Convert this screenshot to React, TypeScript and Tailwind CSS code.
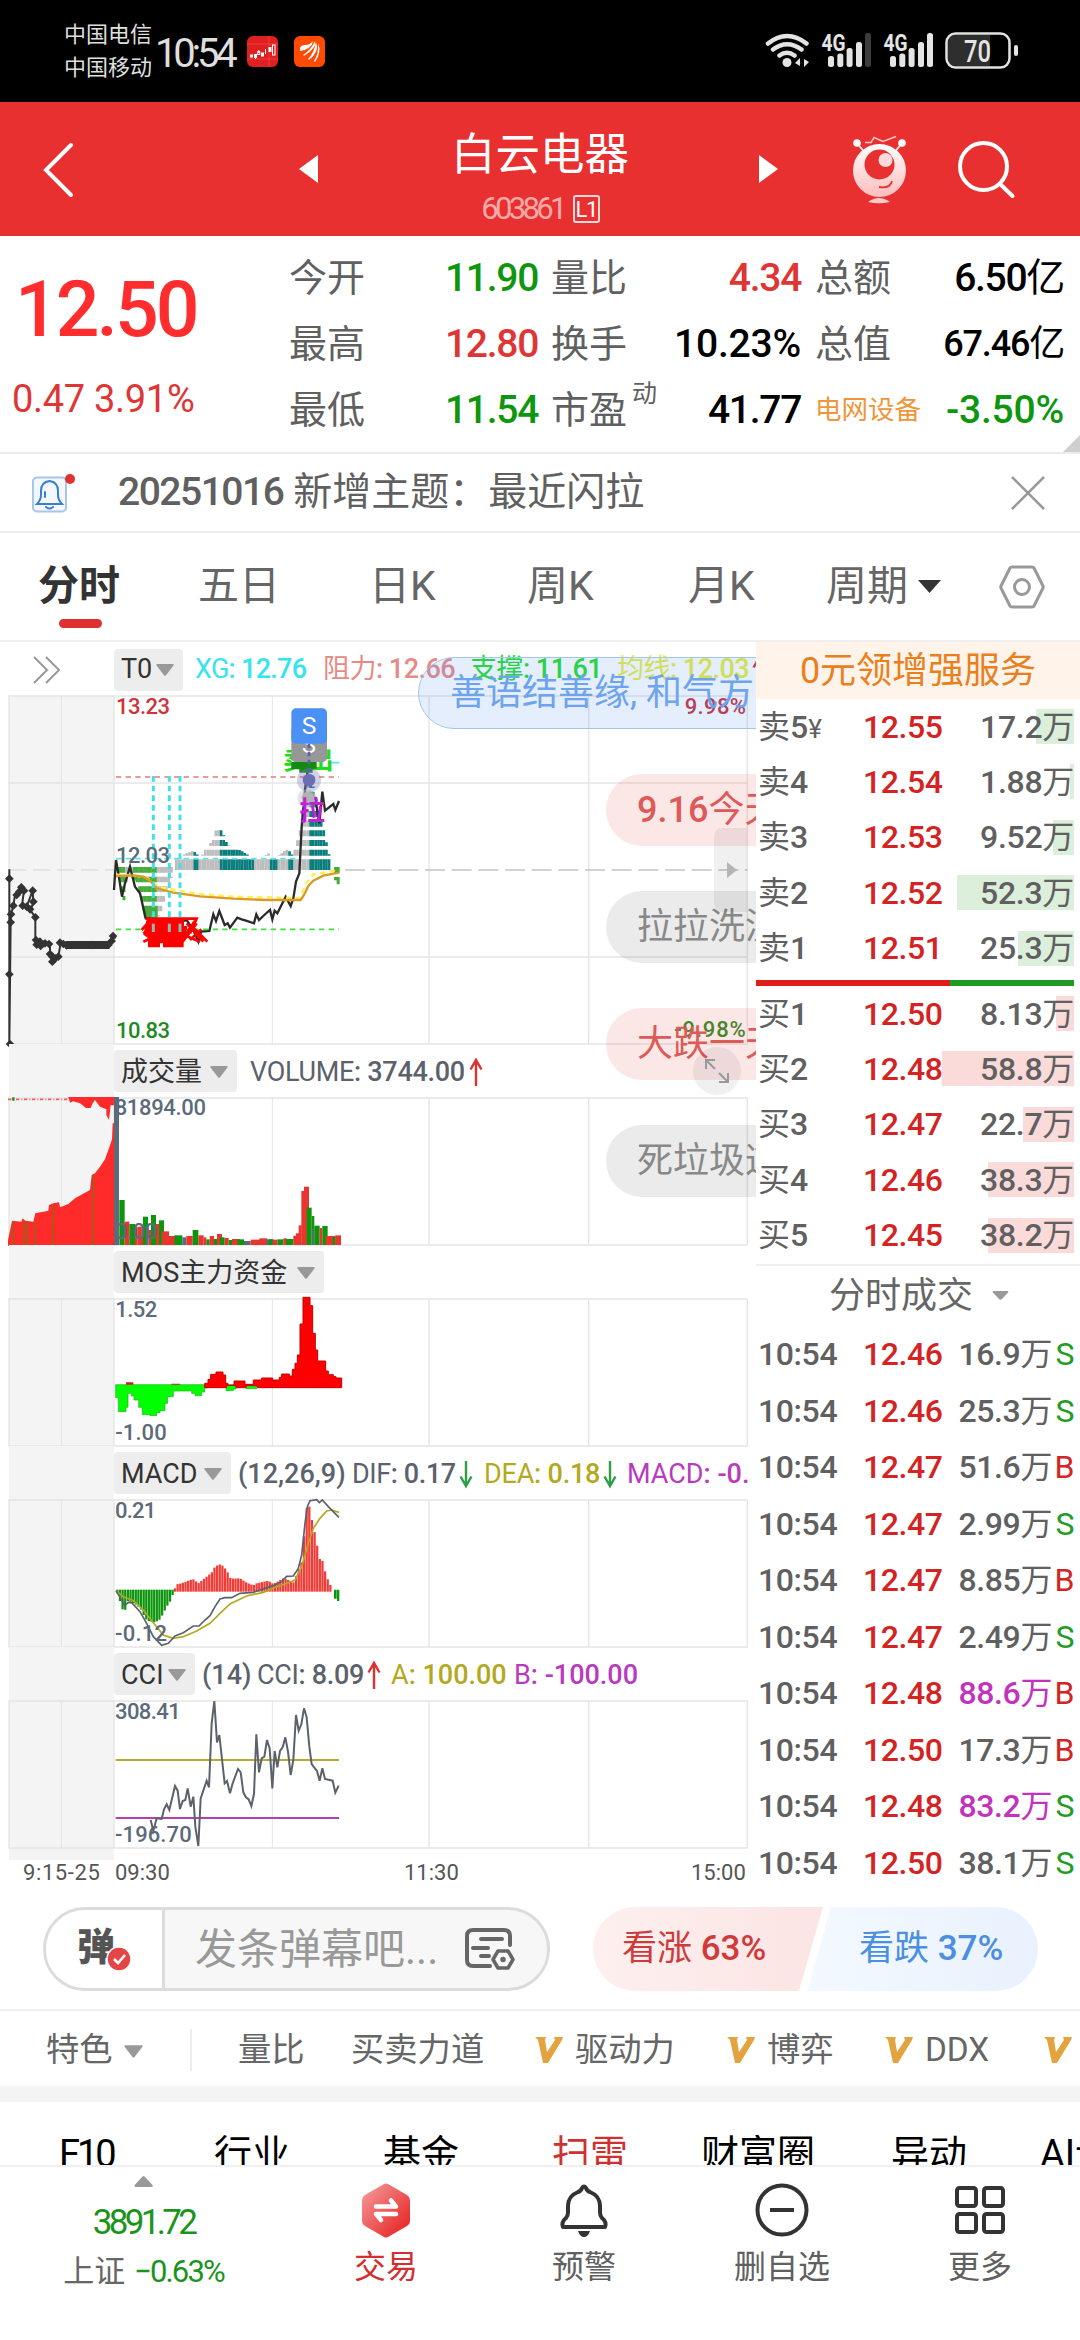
import type { ReactNode } from 'react';

type Point = [number, number];

interface Level {
  label: string;
  price: string;
  volume: string;
  bar: number;
}

const sells: Level[] = [
  { label: '卖5', price: '12.55', volume: '17.2', bar: 38 },
  { label: '卖4', price: '12.54', volume: '1.88', bar: 4 },
  { label: '卖3', price: '12.53', volume: '9.52', bar: 21 },
  { label: '卖2', price: '12.52', volume: '52.3', bar: 117 },
  { label: '卖1', price: '12.51', volume: '25.3', bar: 56 },
];

const buys: Level[] = [
  { label: '买1', price: '12.50', volume: '8.13', bar: 18 },
  { label: '买2', price: '12.48', volume: '58.8', bar: 132 },
  { label: '买3', price: '12.47', volume: '22.7', bar: 51 },
  { label: '买4', price: '12.46', volume: '38.3', bar: 86 },
  { label: '买5', price: '12.45', volume: '38.2', bar: 86 },
];

const trades = [
  { price: '12.46', volume: '16.9', side: 'S' },
  { price: '12.46', volume: '25.3', side: 'S' },
  { price: '12.47', volume: '51.6', side: 'B' },
  { price: '12.47', volume: '2.99', side: 'S' },
  { price: '12.47', volume: '8.85', side: 'B' },
  { price: '12.47', volume: '2.49', side: 'S' },
  { price: '12.48', volume: '88.6', side: 'B', big: true },
  { price: '12.50', volume: '17.3', side: 'B' },
  { price: '12.48', volume: '83.2', side: 'S', big: true },
  { price: '12.50', volume: '38.1', side: 'S' },
];

// Chart space is 3 units per pixel
const priceLine =
  '342,750 348,660 355,700 366,770 375,730 390,680 405,740 420,760 437,835 450,835 470,860 520,850 560,840 580,870 595,905 603,875 628,873 640,823 648,843 658,813 674,855 683,850 690,863 712,833 725,838 738,842 762,850 769,823 777,840 793,825 810,810 817,838 824,812 832,820 857,770 872,798 880,775 888,725 898,700 905,560 915,450 925,380';
const priceTail = '945,470 958,550 967,455 975,512 1000,492 1006,510 1017,483';
const auctionLine =
  '28,688 28,1212 32,847 33,823 40,797 45,765 64,742 72,750 66,797 80,800 98,752 100,785 92,812 106,832 106,905 108,915 150,912 150,942 157,965 175,950 182,908 190,915 325,915 339,888 347,895';
const auctionDots: Point[] = [
  [28, 716], [28, 1003], [30, 1212], [32, 847], [33, 823], [40, 797], [50, 765], [64, 742], [72, 752], [58, 755],
  [68, 797], [80, 800], [98, 752], [100, 785], [90, 808], [106, 832], [108, 900], [110, 914], [120, 905], [122, 918],
  [135, 910], [147, 912], [150, 942], [157, 950], [157, 965], [166, 955], [175, 950], [180, 908], [190, 912],
  [200, 916], [275, 915], [325, 915], [335, 903], [339, 888],
];

const histUp: Point[] = [
  [525, 660], [540, 650], [560, 640], [580, 632], [590, 642], [605, 650], [615, 628], [635, 605], [645, 575],
  [658, 558], [666, 566], [675, 600], [690, 622], [720, 630], [745, 645], [762, 656], [790, 650], [805, 640],
  [822, 654], [845, 640], [862, 625], [878, 645], [890, 610], [900, 570], [915, 470], [928, 420], [940, 440],
  [955, 500], [970, 560], [980, 610], [990, 655],
];
const histDown: Point[] = [
  [356, 710], [364, 765], [374, 785], [382, 710], [395, 705], [408, 730], [420, 760], [430, 800], [440, 830],
  [470, 828], [480, 830], [490, 790], [500, 740], [515, 712], [520, 700],
];
const macdUp: Point[] = [
  [525, 445], [530, 433], [545, 430], [570, 420], [580, 418], [595, 430], [620, 410], [635, 398], [645, 380],
  [658, 373], [670, 378], [685, 400], [692, 416], [720, 415], [740, 428], [760, 436], [770, 430], [805, 422],
  [820, 432], [850, 415], [865, 420], [880, 428], [892, 400], [905, 365], [912, 290], [918, 210], [926, 190],
  [934, 232], [942, 268], [950, 307], [958, 357], [966, 357], [974, 390], [982, 415], [990, 435],
];
const macdDown: Point[] = [
  [352, 460], [358, 475], [365, 505], [374, 515], [384, 482], [395, 487], [410, 495], [425, 510], [435, 535],
  [445, 543], [465, 547], [480, 538], [490, 520], [500, 500], [510, 485], [518, 465],
];

const RED = '#e8362f';
const GREEN = '#0d950d';
const SLATE = '#5b6b7a';
// x, width, top, color
const volumeBars: [number, number, number, string][] = [
  [358, 16, 480, GREEN], [374, 14, 545, RED], [388, 17, 552, GREEN], [405, 8, 562, RED], [413, 16, 560, RED],
  [429, 15, 530, GREEN], [438, 8, 558, SLATE], [446, 8, 570, RED], [453, 15, 525, GREEN], [468, 9, 552, RED],
  [477, 15, 541, GREEN], [485, 22, 574, RED], [507, 18, 588, RED], [523, 24, 586, GREEN], [547, 12, 592, SLATE],
  [559, 19, 588, RED], [578, 17, 570, GREEN], [595, 16, 586, RED], [611, 8, 592, RED], [619, 10, 598, GREEN],
  [629, 13, 588, RED], [642, 9, 597, GREEN], [651, 15, 582, RED], [660, 14, 592, GREEN], [674, 12, 594, RED],
  [686, 10, 600, GREEN], [696, 24, 597, RED], [712, 20, 598, GREEN], [732, 20, 603, SLATE], [752, 28, 599, RED],
  [778, 24, 595, RED], [798, 20, 598, SLATE], [806, 14, 598, GREEN], [818, 14, 599, RED], [832, 18, 598, GREEN],
  [850, 10, 595, RED], [858, 22, 597, GREEN], [880, 12, 587, RED], [888, 10, 580, RED], [896, 9, 556, RED],
  [904, 8, 453, RED], [912, 15, 440, RED], [920, 15, 503, GREEN], [935, 8, 528, GREEN], [937, 6, 565, SLATE],
  [943, 16, 557, GREEN], [959, 8, 564, RED], [967, 16, 558, GREEN], [977, 30, 588, RED], [998, 8, 590, GREEN],
  [1006, 17, 586, RED],
];

// Linear interpolation between the key points
function valueAt(keys: Point[], x: number) {
  for (let i = 1; i < keys.length; i++) {
    const [x0, y0] = keys[i - 1];
    const [x1, y1] = keys[i];
    if (x <= x1) return y0 + ((y1 - y0) * (x - x0)) / (x1 - x0);
  }
  return keys[keys.length - 1][1];
}

function minutes(from: number, to: number) {
  const xs: number[] = [];
  for (let x = from; x <= to; x += 7.9) xs.push(x);
  return xs;
}

function histColor(x: number) {
  const teal =
    (x > 582 && x < 600) || (x > 662 && x < 764) || (x > 811 && x < 822) || (x > 828 && x < 836) || (x > 868 && x < 884) || x > 931;
  return teal ? '#0b7d7d' : '#bdbdbd';
}

// Digits are set a step heavier than the words around them
function Mixed({ text }: { text: string }) {
  return (
    <>
      {text.split(/([0-9.,:%()-]+)/).map((part, i) => (
        <span key={i} className={i % 2 ? 'font-medium' : ''}>
          {part}
        </span>
      ))}
    </>
  );
}

function Pane({ y, h, rows, children }: { y: number; h: number; rows?: number[]; children: ReactNode }) {
  return (
    <svg className="block overflow-visible" width="756" height={h / 3} viewBox={`0 ${y} 2268 ${h}`}>
      <rect x="27" y={y} width="315" height={h} fill="#f4f4f4" />
      <g stroke="#e4e4e4" strokeWidth="4">
        {[184, 817].map((x) => (
          <line key={x} x1={x} x2={x} y1={y} y2={y + h} strokeWidth="3" />
        ))}
        {[27, 342, 1287, 1766, 2242].map((x) => (
          <line key={x} x1={x} x2={x} y1={y} y2={y + h} />
        ))}
        {[y, y + h, ...(rows ?? [])].map((v) => (
          <line key={v} x1="25" x2="2243" y1={v} y2={v} strokeWidth="5" />
        ))}
      </g>
      {children}
    </svg>
  );
}

function Label({ x, y, w, color, children }: { x: number; y: number; w: number; color?: string; children: string }) {
  return (
    <text x={x} y={y} fontSize="66" textLength={w} fontWeight="500" fill={color ?? '#5b6b7a'}>
      {children}
    </text>
  );
}

function Caret({ className, color }: { className?: string; color?: string }) {
  return (
    <svg className={className} width="20" height="12" viewBox="0 0 20 12" fill={color ?? '#999'}>
      <path d="M2.500 0h15q2 0 .8 1.800L11 11.200q-1 1-2 0L1.700 1.800Q.5 0 2.500 0z" />
    </svg>
  );
}

function PaneHeader({ title, chip, children }: { title: string; chip: string; children?: ReactNode }) {
  return (
    <div className="flex h-[54px] items-center whitespace-nowrap text-[27px] text-[#5b626c]">
      <div className="ml-[9px] h-full w-[105px] shrink-0 bg-[#f4f4f4]" />
      <div className={`flex h-[42px] shrink-0 items-center justify-between rounded bg-[#ededed] pl-[7px] pr-[8px] pt-[2px] text-[#333] ${chip}`}>
        <span>{title}</span>
        <Caret />
      </div>
      <div className="flex min-w-0 flex-1 items-center pt-[2px]">{children}</div>
    </div>
  );
}

function Arrow({ down }: { down?: boolean }) {
  return (
    <svg className="shrink-0" width="14" height="30" viewBox="0 0 14 30" fill="none" stroke={down ? '#2f9e44' : '#e03131'} strokeWidth="2.400">
      {down ? <path d="M7 2v25M1.500 17.500L7 27l5.500-9.500" /> : <path d="M7 29V3M1.500 12.500L7 3l5.500 9.500" />}
    </svg>
  );
}

function StatusBar() {
  return (
    <div className="flex h-[102px] bg-black text-[#dedede]">
      <div className="ml-[64px] mt-[18px] h-[66px] w-[91px] text-[22px] leading-[33px]">
        <p>中国电信</p>
        <p>中国移动</p>
      </div>
      <div className="mt-[31px] w-[92px] text-[40px] leading-[46px] tracking-[-4.200px]">10:54</div>
      <svg className="mt-[36px]" width="31" height="31" viewBox="0 0 31 31">
        <rect width="31" height="31" rx="6" fill="#e02020" />
        <path d="M0 8h31M0 23h31M22 0v31" stroke="#f04a4a" strokeWidth=".7" />
        <g fill="#fff">
          <rect x="3" y="18.500" width="3" height="3" />
          <rect x="14" y="16.500" width="3" height="4" />
          <rect x="21.500" y="11" width="3" height="5" />
        </g>
        <g fill="none" stroke="#fff">
          <path d="M8.500 18v5M11.700 14v3M18.500 13v5" />
          <rect x="7.500" y="18.500" width="2" height="3" />
          <rect x="10.700" y="15.500" width="2" height="3" />
          <rect x="25.500" y="9" width="2.500" height="10" />
        </g>
      </svg>
      <svg className="ml-[16px] mt-[36px]" width="31" height="31" viewBox="0 0 31 31">
        <rect width="31" height="31" rx="6" fill="#ff4a00" />
        <g fill="#fff">
          <path d="M6 12q1-3 5-3 5 0 8-4-1 8-13 10z" />
          <path d="M9 19q8-5 12-14 2 7-11 15z" />
          <path d="M14 23q6-6 8-17 4 9-7 18z" />
          <path d="M20 25q5-8 4-18 4 9-3 19z" />
        </g>
      </svg>
      <svg className="ml-auto mr-[60px] mt-[30px]" width="256" height="42" viewBox="764 30 256 42">
        <g fill="none" stroke="#e4e4e4" strokeWidth="4.500" strokeLinecap="round">
          <path d="M768 43.500q19-15 38.500 0M773 49.500q14-10.500 28.500 0M779.500 55.500q7.500-5.500 15 0" />
        </g>
        <circle cx="787" cy="62.500" r="4.500" fill="#e4e4e4" />
        <path d="M795 63l5-5v8zM809 62l-5-3v8z" fill="#e4e4e4" />
        {[0, 62].map((dx) => (
          <g key={dx} fill="#e4e4e4">
            <text x={821.500 + dx} y="51" fontSize="23" fontWeight="700" textLength="24" lengthAdjust="spacingAndGlyphs">
              4G
            </text>
            <rect x={828 + dx} y="56" width="6" height="11" rx="2.500" />
            <rect x={837.300 + dx} y="53.500" width="6" height="13.500" rx="2.500" />
            <rect x={846.600 + dx} y="48" width="6" height="19" rx="2.500" />
            <rect x={856 + dx} y="42" width="6" height="25" rx="2.500" />
            <rect x={865 + dx} y="33" width="6" height="34" rx="2.500" fill={dx ? '#e4e4e4' : '#3c3c3c'} />
          </g>
        ))}
        <path d="M956 35h34v31h-34q-8 0-8-8V43q0-8 8-8z" fill="#2e2e2e" />
        <rect x="946.500" y="33.500" width="63" height="34" rx="9" fill="none" stroke="#e0e4e0" strokeWidth="2.500" />
        <rect x="1014" y="45" width="4" height="11" rx="2" fill="#e4e4e4" />
        <text x="964" y="62" fontSize="31" fontWeight="500" textLength="27" lengthAdjust="spacingAndGlyphs" fill="#e4e4e4">
          70
        </text>
      </svg>
    </div>
  );
}

function Header() {
  return (
    <div className="flex h-[134px] bg-[#e93030] text-white">
      <svg className="ml-[42px] mt-[40px]" width="32" height="56" viewBox="0 0 32 56" fill="none" stroke="#fff" strokeWidth="4" strokeLinecap="round">
        <path d="M29 3L4 28l25 25" />
      </svg>
      <svg className="ml-[225px] mt-[53px]" width="19" height="28" viewBox="0 0 19 28" fill="#fff">
        <path d="M19 0v28L0 14z" />
      </svg>
      <div className="w-[441px] text-center">
        <h1 className="mt-[23px] pl-[3px] text-[44.500px] font-normal leading-[60px]">白云电器</h1>
        <div className="mt-[9px] flex h-[30px] items-center justify-center gap-[6px] pl-[4px]">
          <span className="text-[31px] tracking-[-3.700px] text-[#ffa9a9]">603861</span>
          <span className="ml-[3px] flex h-[28px] w-[27px] items-center justify-center rounded-[3px] border-2 border-[#ffd9d9] text-[22px] tracking-[-1.500px]">
            L1
          </span>
        </div>
      </div>
      <svg className="mt-[53px]" width="19" height="28" viewBox="0 0 19 28" fill="#fff">
        <path d="M0 0v28l19-14z" />
      </svg>
      <svg className="ml-[73px] mt-[32px]" width="56" height="70" viewBox="851 134 56 70">
        <defs>
          <linearGradient id="bot" x1="0" y1="0" x2="0" y2="1">
            <stop offset="0" stopColor="#fff" />
            <stop offset="1" stopColor="#ffbcbc" />
          </linearGradient>
        </defs>
        <path d="M857 143l8 10M902 143l-8 10" stroke="#ffdede" strokeWidth="2" />
        <circle cx="857" cy="143" r="3.800" fill="#fff" />
        <circle cx="902" cy="143" r="3.800" fill="#fff" />
        <path d="M865 142.500h6l3-5 9 4 13-5" fill="none" stroke="#ffc4c4" strokeWidth="1.500" />
        <circle cx="879.500" cy="170.500" r="26.500" fill="url(#bot)" />
        <circle cx="879.500" cy="164.500" r="15" fill="#e93030" />
        <circle cx="885.500" cy="160" r="7" fill="#ffdada" />
        <path d="M879 187q11 2 13-6" fill="none" stroke="#e93030" strokeWidth="1.800" />
        <path d="M868 202q11-8 22 0-11 2.500-22 0z" fill="#ffcaca" />
      </svg>
      <svg className="ml-[50px] mt-[38px]" width="60" height="62" viewBox="957 140 60 62" fill="none" stroke="#fff" strokeWidth="4" strokeLinecap="round">
        <circle cx="983.500" cy="166.500" r="23.500" />
        <path d="M1000 184l12.500 12" />
      </svg>
    </div>
  );
}

function Stat({ label, value, color, size }: { label: string; value: string; color: string; size?: string }) {
  return (
    <div className="flex h-[66px] items-center justify-between">
      <span className="text-[38px] text-[#606060]">{label}</span>
      <span className={`${size ?? 'text-[39px] tracking-[-1.300px]'} ${color}`}>
        <Mixed text={value} />
      </span>
    </div>
  );
}

function Quote() {
  return (
    <div className="relative flex h-[216px] leading-none">
      <div className="w-[289px] whitespace-nowrap">
        <p className="ml-[15px] mt-[34px] text-[77px] font-medium leading-[80px] tracking-[-3px] text-[#ff2d2d]">12.50</p>
        <p className="ml-[12px] mt-[29px] text-[38px] leading-[40px] tracking-[-0.300px] text-[#e03535]">0.47 3.91%</p>
      </div>
      <div className="mt-[9px] w-[249px]">
        <Stat label="今开" value="11.90" color="text-[#0f960f]" />
        <Stat label="最高" value="12.80" color="text-[#e03535]" />
        <Stat label="最低" value="11.54" color="text-[#0f960f]" />
      </div>
      <div className="ml-[13px] mt-[9px] w-[250px]">
        <Stat label="量比" value="4.34" color="text-[#e03535]" />
        <Stat label="换手" value="10.23%" color="text-black" size="text-[39px] tracking-[-0.200px]" />
        <div className="flex h-[66px] items-center">
          <span className="text-[38px] text-[#606060]">市盈</span>
          <span className="mb-[34px] ml-[5px] text-[25px] text-[#606060]">动</span>
          <span className="ml-auto text-[39px] font-medium tracking-[-1.300px] text-black">41.77</span>
        </div>
      </div>
      <div className="ml-[14px] mt-[9px] w-[249px]">
        <Stat label="总额" value="6.50亿" color="text-black" />
        <Stat label="总值" value="67.46亿" color="text-black" size="text-[36px] tracking-[-1.200px]" />
        <div className="flex h-[66px] items-center justify-between">
          <span className="text-[26.500px] text-[#ef963a]">电网设备</span>
          <span className="text-[39px] font-medium tracking-[-0.200px] text-[#0f960f]">-3.50%</span>
        </div>
      </div>
      <svg className="absolute bottom-0 right-0" width="17" height="17" viewBox="0 0 17 17" fill="#cfcfcf">
        <path d="M17 0v17H0z" />
      </svg>
    </div>
  );
}

function Notice() {
  return (
    <div className="flex h-[81px] items-center border-y-2 border-[#ececec] text-[39px] text-[#606060]">
      <svg className="ml-[30px]" width="48" height="46" viewBox="30 468 48 46" fill="none">
        <rect x="33" y="475.500" width="33" height="34" rx="4" fill="#f3f8fe" stroke="#a6c6ea" strokeWidth="2" />
        <path d="M37 502h25q-4-4-4-9v-4q0-9-8.500-10-8.500 1-8.500 10v4q0 5-4 9zM46 505q3.500 3 7 0M45 490v5" stroke="#3b7fd0" strokeWidth="2" strokeLinecap="round" />
        <circle cx="70" cy="477" r="5" fill="#e03131" />
      </svg>
      <span className="ml-[40px] tracking-[-1.500px]">
        <Mixed text="20251016" />
      </span>
      <span className="ml-[10px]">新增主题：最近闪拉</span>
      <svg className="ml-auto mr-[34px]" width="36" height="36" viewBox="0 0 36 36" stroke="#999" strokeWidth="2.500">
        <path d="M2 2l32 32M34 2L2 34" />
      </svg>
    </div>
  );
}

function PeriodTabs() {
  return (
    <div className="flex h-[109px] items-center whitespace-nowrap border-b-2 border-[#efefef] text-[41px] text-[#666]">
      <div className="relative ml-[38px] w-[160px] font-bold text-[#333]">
        分时
        <div className="absolute left-[21px] top-[63px] h-[9px] w-[43px] rounded-full bg-[#e03131]" />
      </div>
      <span className="w-[171px]">五日</span>
      <span className="w-[158px]">日K</span>
      <span className="w-[161px]">周K</span>
      <span className="w-[138px]">月K</span>
      <span className="w-[92px]">周期</span>
      <svg width="23" height="13" viewBox="0 0 23 13" fill="#333">
        <path d="M0 0h23L11.500 13z" />
      </svg>
      <svg className="ml-[57px]" width="48" height="44" viewBox="0 0 48 44" fill="none" stroke="#999" strokeWidth="3">
        <path d="M14 2h20q1.500 0 2 1l9 18q.5 1 0 2l-9 18q-.5 1-2 1H14q-1.500 0-2-1L3 23q-.5-1 0-2l9-18q.5-1 2-1z" />
        <circle cx="24" cy="22" r="7.500" />
      </svg>
    </div>
  );
}

function PriceChart() {
  return (
    <Pane y={168} h={1044} rows={[429, 951]}>
      <line x1="27" x2="342" y1="690" y2="690" stroke="#dedede" strokeWidth="4" strokeDasharray="52 20" />
      <line x1="1035" x2="2242" y1="690" y2="690" stroke="#c4c4c4" strokeWidth="5" strokeDasharray="60 20" />
      <polyline points={auctionLine} fill="none" stroke="#333" strokeWidth="6" />
      <line x1="196" x2="328" y1="915" y2="915" stroke="#333" strokeWidth="24" />
      {auctionDots.map(([x, y], i) => (
        <path key={i} d={`M${x - 13} ${y}l13 -13l13 13l-13 13z`} fill="#333" />
      ))}

      <Label x={348} y={221} w={162} color="#cf3338">13.23</Label>
      <Label x={348} y={1193} w={162} color="#1f8a1f">10.83</Label>

      {/* stripes above and below the previous close */}
      {minutes(529, 992).map((x) => (
        <line key={x} x1={x} x2={x} y1="690" y2={valueAt(histUp, x)} stroke={histColor(x)} strokeWidth="8" strokeDasharray="32 11 18 11 18 11 18 11 18 11 18 11 18 11 18 11" />
      ))}
      {minutes(356, 520).map((x) => (
        <line key={x} x1={x} x2={x} y1="681" y2={valueAt(histDown, x)} stroke={x > 474 || (x > 378 && x < 396) ? '#bdbdbd' : '#46ad3c'} strokeWidth="9" strokeDasharray="17 12" />
      ))}
      <path d="M425 799h48v35h-40z" fill="#46ad3c" />
      <path d="M1002 681h17v18h-17zM1002 711h17v22h-9v-12h-8z" fill="#46ad3c" />

      <line x1="348" x2="890" y1="656" y2="656" stroke="#5fe3ea" strokeWidth="5" strokeDasharray="16 13" />
      <polyline points={priceLine} fill="none" stroke="#2b2b2b" strokeWidth="7" />
      <polyline points={priceTail} fill="none" stroke="#2b2b2b" strokeWidth="7" />
      <polyline points="348,704 400,706 440,713 480,742 520,749 600,762 700,770 800,772 900,774 918,730 940,703 1017,690" fill="none" stroke="#fff04a" strokeWidth="7" strokeDasharray="16 13" />
      <polyline points="348,708 400,706 430,710 450,722 470,745 520,758 600,769 700,776 800,780 902,780 912,765 925,738 940,722 970,707 1017,698" fill="none" stroke="#dc9a22" strokeWidth="7" />
      <line x1="348" x2="1017" y1="411" y2="411" stroke="#e07b7b" strokeWidth="5" strokeDasharray="16 13" />
      <line x1="348" x2="1017" y1="868" y2="868" stroke="#3fe03f" strokeWidth="5" strokeDasharray="16 13" />

      <g fill="none" stroke="#f00" strokeWidth="8">
        <path d="M437 836H590L570 880M425 870L450 842M430 880L455 862M430 905L448 897" />
        <path d="M548 905L590 850M540 880L600 905M560 850L610 905M575 858L622 905M552 890L585 842M570 900L604 868" />
      </g>
      <path d="M440 838h112v20h10l-6 36h-5v28h-62v-12h-9v12h-36v-28l-14-10z" fill="#f00" />
      {[460, 508, 540].map((x) => (
        <g key={x} stroke="#45dfe6" strokeWidth="9">
          <line x1={x} x2={x} y1="408" y2="836" strokeDasharray="17 12" />
          <line x1={x} x2={x} y1="851" y2="876" stroke="#8fb8b8" />
        </g>
      ))}
      <Label x={348} y={670} w={162}>12.03</Label>

      <line x1="985" x2="1018" y1="368" y2="368" stroke="#5fe3ea" strokeWidth="5" />
      <text x="849" y="388" fontSize="76" fontWeight="700" fill="#1fdc1f">卖出</text>
      <path d="M874 366h76v20h-12v12h-40v-10h-24z" fill="#138a13" />
      <circle cx="920" cy="475" r="28" fill="#cccccc" opacity=".5" />
      <circle cx="924" cy="474" r="19" fill="#b2b2b2" />
      <circle cx="927" cy="420" r="36" fill="#7a7ac0" opacity=".35" />
      <circle cx="927" cy="420" r="19" fill="#6d6db5" />
      <text x="898" y="541" fontSize="77" fontWeight="700" fill="#c41fd6">拉</text>

      <rect x="874" y="260" width="107" height="106" rx="14" fill="#979797" />
      <text x="927" y="338" fontSize="70" textAnchor="middle" fill="#fff">S</text>
      <line x1="927" x2="927" y1="311" y2="400" stroke="#5f5fae" strokeWidth="8" strokeDasharray="14 10" />
      <rect x="874" y="205" width="107" height="106" rx="14" fill="#4a90f5" />
      <text x="927" y="283" fontSize="74" textAnchor="middle" fill="#fff">S</text>

      <Label x={2054} y={223} w={184} color="#c8333a">9.98%</Label>
      <Label x={2023} y={1192} w={214} color="#2f8a1f">-9.98%</Label>
    </Pane>
  );
}

function VolumeChart() {
  return (
    <Pane y={174} h={441}>
      <path d="M24 617V600L36 542L64 545L68 535L76 542L100 545L106 520L145 512L147 495L160 490L177 487L180 502L205 492L225 475L270 450L275 405L285 400L300 380L315 358L327 325L336 298L338 250H343V617z" fill="#ff2b2b" />
      <path d="M205 171H343V196H332L327 240L319 225V208L300 200L285 180L278 190L272 204H258L240 190L220 184L210 188z" fill="#ff2b2b" />
      <path d="M24 178H205" stroke="#f06060" strokeWidth="5" strokeDasharray="10 6 3 5" />
      <path d="M40 172v10" stroke={GREEN} strokeWidth="7" />
      <path d="M40 545V615M72 543V615M82 543V615M104 545V615M160 492V615M278 405V615" stroke="#8a6a14" strokeWidth="4" />
      <Label x={344} y={226} w={274}>81894.00</Label>
      <rect x="342" y="171" width="15" height="444" fill="#5b6b7a" />
      {volumeBars.map(([x, w, top, color]) => (
        <rect key={x} x={x} y={top} width={w} height={615 - top} fill={color} />
      ))}
      <Label x={344} y={596} w={128}>0.00</Label>
    </Pane>
  );
}

function MosChart() {
  return (
    <Pane y={777} h={441}>
      <Label x={346} y={830} w={126}>1.52</Label>
      <Label x={346} y={1199} w={154}>-1.00</Label>
      <path d="M347 1034V1073H355V1115H378V1102H384V1060H394V1068H402V1080H416V1102H427V1124H450V1127H470V1118H480V1112H495V1090H503V1070H520V1053H575V1060H585V1067H605V1056H614V1044H622V1034zM678 1034V1052H700V1047H708V1034zM738 1034V1046H770V1034z" fill="#00ff00" stroke="#1fae1f" strokeWidth="2" />
      <path d="M378 1034V1027H400V1034zM514 1034V1031H540V1034z" fill="#c22" />
      <path d="M614 1043V1030H624V1018H632V1003H648V996H669V1005H677V1030H684V1036H702V1023H735V1033H760V1020H785V1014H818V1020H838V1012H845V1002H868V1008H877V988H885V970H892V945H900V852H909V772H930V797H938V880H946V930H953V963H977V993H985V1004H1000V1010H1008V1014H1025V1043H772V1037H738V1043H708V1036H680V1043z" fill="#ff0000" stroke="#c80000" strokeWidth="3" />
    </Pane>
  );
}

function MacdChart() {
  return (
    <Pane y={180} h={441}>
      <Label x={345} y={234} w={124}>0.21</Label>
      {minutes(525, 994).map((x) => (
        <line key={x} x1={x} x2={x} y1="455" y2={valueAt(macdUp, x)} stroke="#f23a36" strokeWidth="6.800" />
      ))}
      {minutes(352, 519).map((x) => (
        <line key={x} x1={x} x2={x} y1="449" y2={valueAt(macdDown, x)} stroke={GREEN} strokeWidth="6.800" />
      ))}
      <path d="M1002 449h8v27h-8zM1011 449h7v34h-7z" fill={GREEN} />
      <polyline points="348,452 370,470 400,482 430,510 460,548 490,585 520,595 550,590 590,573 630,550 660,520 690,492 740,468 790,457 830,440 860,430 885,420 905,380 925,310 940,265 960,235 980,213 995,210 1017,217" fill="none" stroke="#b3a921" strokeWidth="5" />
      <polyline points="348,452 362,475 374,497 385,487 395,488 420,515 440,550 460,590 485,616 505,610 525,588 550,578 580,558 597,558 615,540 630,527 645,500 660,477 675,473 695,473 720,460 760,457 780,450 820,437 845,425 860,409 880,408 895,385 905,345 915,250 922,200 930,182 950,179 958,188 967,180 985,200 1017,232" fill="none" stroke="#5b626c" strokeWidth="5" />
      <Label x={345} y={603} w={156}>-0.12</Label>
    </Pane>
  );
}

function CciChart() {
  return (
    <Pane y={783} h={441}>
      <Label x={345} y={837} w={197}>308.41</Label>
      <Label x={345} y={1206} w={230}>-196.70</Label>
      <line x1="347" x2="1017" y1="960" y2="960" stroke="#b3ad35" strokeWidth="6" />
      <line x1="347" x2="1017" y1="1134" y2="1134" stroke="#b23fb4" strokeWidth="6" />
      <polyline points="452,1140 460,1172 470,1135 485,1137 492,1108 500,1093 508,1110 525,1038 533,1052 540,1107 548,1083 556,1080 563,1045 572,1100 580,1070 586,1160 595,1218 602,1075 620,1022 627,1042 635,850 643,783 651,907 658,885 674,1030 681,1023 690,1060 698,1030 714,987 722,997 730,1057 738,1072 746,1078 754,1098 762,1062 769,883 777,997 785,955 793,950 801,900 809,925 817,1045 824,933 832,982 840,933 848,922 856,892 864,935 872,1005 880,960 888,825 896,872 904,853 912,805 920,832 928,920 935,972 943,983 951,993 959,1022 967,985 975,1017 998,1022 1006,1058 1016,1037" fill="none" stroke="#5b626c" strokeWidth="6" />
    </Pane>
  );
}

// Floating viewer comments, cut off at the right edge of the chart
function Danmaku() {
  return (
    <div className="whitespace-nowrap text-[36px] leading-none">
      <div className="absolute left-[418px] top-[15px] flex h-[72px] w-[400px] items-center rounded-l-full border border-[#a5c6ec] bg-[#4a90f0]/15 pl-[31px] text-[#6ea4ee]">
        善语结善缘, 和气方
      </div>
      <div className="absolute left-[606px] top-[132px] flex h-[72px] w-[200px] items-center rounded-l-full bg-[#e86060]/15 pl-[31px] text-[#dc5a58]">
        <Mixed text="9.16今天" />
      </div>
      <div className="absolute left-[606px] top-[249px] flex h-[72px] w-[200px] items-center rounded-l-full bg-black/8 pl-[31px] text-[#888]">
        拉拉洗洗
      </div>
      <div className="absolute left-[606px] top-[366px] flex h-[72px] w-[200px] items-center rounded-l-full bg-[#e86060]/15 pl-[31px] text-[#dc5a58]">
        大跌一天
      </div>
      <div className="absolute left-[606px] top-[483px] flex h-[72px] w-[200px] items-center rounded-l-full bg-black/8 pl-[31px] text-[#888]">
        死垃圾这
      </div>
      <div className="absolute left-[714px] top-[186px] flex h-[84px] w-[33px] items-center rounded-l-lg bg-black/6 pl-[13px]">
        <svg width="10" height="16" viewBox="0 0 10 16" fill="#b5b5b5">
          <path d="M0 0v16l10-8z" />
        </svg>
      </div>
      <div className="absolute left-[693px] top-[405px] flex size-[48px] items-center justify-center rounded-full bg-black/6">
        <svg width="26" height="26" viewBox="0 0 26 26" fill="none" stroke="#999" strokeWidth="2">
          <path d="M2 11V2h9M2 2l9 9M24 15v9h-9M24 24l-9-9" />
        </svg>
      </div>
    </div>
  );
}

function Charts() {
  return (
    <div className="relative h-[1248px] w-[756px] shrink-0 overflow-hidden">
      <div className="flex h-[54px] items-center whitespace-nowrap pt-[1px] text-[27px]">
        <svg className="ml-[33px] mr-[53px] shrink-0" width="28" height="28" viewBox="0 0 28 28" fill="none" stroke="#999" strokeWidth="2">
          <path d="M1 1l13 13L1 27M13 1l13 13-13 13" />
        </svg>
        <div className="mr-[12px] flex h-[42px] w-[69px] shrink-0 items-center justify-between rounded bg-[#ededed] pl-[7px] pr-[8px] text-[#333]">
          T0
          <Caret />
        </div>
        <span className="w-[128px] shrink-0 tracking-[-0.700px] text-[#35e4ee]">
          <Mixed text="XG: 12.76" />
        </span>
        <span className="w-[147px] shrink-0 tracking-[-0.500px] text-[#e68a86]">
          <Mixed text="阻力: 12.66" />
        </span>
        <span className="w-[147px] shrink-0 tracking-[-0.500px] text-[#22e02a]">
          <Mixed text="支撑: 11.61" />
        </span>
        <span className="w-[135px] shrink-0 tracking-[-0.500px] text-[#e8ee3c]">
          <Mixed text="均线: 12.03" />
        </span>
        <Arrow />
      </div>
      <PriceChart />
      <PaneHeader title="成交量" chip="w-[123px]">
        <span className="ml-[13px] w-[219px] tracking-[-0.300px]">
          <Mixed text="VOLUME: 3744.00" />
        </span>
        <Arrow />
      </PaneHeader>
      <VolumeChart />
      <PaneHeader title="MOS主力资金" chip="w-[210px]" />
      <MosChart />
      <PaneHeader title="MACD" chip="w-[117px]">
        <span className="ml-[7px] w-[114px] shrink-0">
          <Mixed text="(12,26,9)" />
        </span>
        <span className="w-[107px] shrink-0 tracking-[-0.400px]">
          <Mixed text="DIF: 0.17" />
        </span>
        <Arrow down />
        <span className="ml-[11px] w-[119px] shrink-0 tracking-[-0.200px] text-[#b3a921]">
          <Mixed text="DEA: 0.18" />
        </span>
        <Arrow down />
        <span className="ml-[10px] text-[#b83abf]">
          <Mixed text="MACD: -0." />
        </span>
      </PaneHeader>
      <MacdChart />
      <PaneHeader title="CCI" chip="w-[81px]">
        <span className="ml-[7px] w-[55px] shrink-0">
          <Mixed text="(14)" />
        </span>
        <span className="w-[110px] shrink-0 tracking-[-0.300px]">
          <Mixed text="CCI: 8.09" />
        </span>
        <Arrow />
        <span className="ml-[10px] w-[123px] text-[#b3a921]">
          <Mixed text="A: 100.00" />
        </span>
        <span className="text-[#b83abf]">
          <Mixed text="B: -100.00" />
        </span>
      </PaneHeader>
      <CciChart />
      <div className="ml-[9px] h-[12px] w-[105px] bg-[#f4f4f4]" />
      <div className="flex text-[22px] leading-[26px] text-[#555]">
        <span className="ml-[23px] w-[92px] tracking-[0.600px]">9:15-25</span>
        <span className="w-[289px]">09:30</span>
        <span className="w-[287px]">11:30</span>
        <span>15:00</span>
      </div>
      <Danmaku />
    </div>
  );
}

function LevelRow({ level, mark, sell }: { level: Level; mark?: boolean; sell?: boolean }) {
  return (
    <div className="relative flex h-[55.400px] items-center text-[#606060]">
      <div
        className={`absolute right-[6px] top-[10px] h-[35px] ${sell ? 'bg-[#dbefdb]' : 'bg-[#fbdada]'}`}
        style={{ width: level.bar }}
      />
      <span className="relative ml-[2px] w-[105px] text-[32px]">
        <Mixed text={level.label} />
        {mark && <span className="text-[26px]">¥</span>}
      </span>
      <span className="relative text-[32px] font-medium tracking-[-0.400px] text-[#d42323]">{level.price}</span>
      <span className="relative ml-auto mr-[6px] text-[32px] tracking-[-0.300px]">
        <Mixed text={`${level.volume}万`} />
      </span>
    </div>
  );
}

function OrderBook() {
  return (
    <div className="w-[324px] overflow-hidden whitespace-nowrap">
      <div className="flex h-[57px] items-center justify-center bg-[#fff3ea] text-[36px] text-[#e8801e]">0元领增强服务</div>
      {sells.map((level, i) => (
        <LevelRow key={level.label} level={level} mark={i === 0} sell />
      ))}
      <div className="mt-[4px] flex h-[6px] w-[318px]">
        <div className="w-[194px] bg-[#e01b1b]" />
        <div className="flex-1 bg-[#1f9a22]" />
      </div>
      {buys.map((level) => (
        <LevelRow key={level.label} level={level} />
      ))}
      <div className="mt-[1px] flex h-[62px] items-center justify-center border-t-2 border-[#efefef] pl-[2px] text-[36px] text-[#666]">
        分时成交
        <svg className="ml-[19px]" width="17" height="9" viewBox="0 0 17 9" fill="#999">
          <path d="M1.500 0h14q1.500 0 .5 1.500L10 8q-1.500 1.300-3 0L1 1.500Q0 0 1.500 0z" />
        </svg>
      </div>
      {trades.map((trade, i) => (
        <div key={i} className="flex h-[56.500px] items-center text-[32px] tracking-[-0.400px] text-[#606060]">
          <span className="ml-[2px] w-[105px]">
            <Mixed text="10:54" />
          </span>
          <span className="font-medium text-[#d42323]">{trade.price}</span>
          <span className={`ml-auto ${trade.big ? 'text-[#c232bd]' : ''}`}>
            <Mixed text={`${trade.volume}万`} />
          </span>
          <span className={`mr-[6px] w-[22px] text-right ${trade.side === 'S' ? 'text-[#239c23]' : 'text-[#d42323]'}`}>{trade.side}</span>
        </div>
      ))}
    </div>
  );
}

function CommentBar() {
  return (
    <div className="flex h-[119px] whitespace-nowrap">
      <div className="ml-[43px] mt-[17px] flex h-[84px] w-[507px] overflow-hidden rounded-full border-[3px] border-[#dcdcdc] bg-[#f7f7f7]">
        <div className="relative flex w-[119px] shrink-0 items-center border-r-[3px] border-[#dcdcdc] bg-white pb-[4px] pl-[31px] text-[38px] font-black text-[#555]">
          弹
          <svg className="absolute left-[60px] top-[36px]" width="26" height="26" viewBox="0 0 26 26">
            <circle cx="13" cy="13" r="12" fill="#e64545" stroke="#fff" strokeWidth="1.500" />
            <path d="M8 13l4 4 7-8" fill="none" stroke="#fff" strokeWidth="2.600" />
          </svg>
        </div>
        <span className="ml-[30px] flex w-[270px] shrink-0 items-center text-[42px] text-[#999]">发条弹幕吧...</span>
        <svg className="mt-[18px] shrink-0" width="50" height="42" viewBox="0 0 50 42" fill="none" stroke="#666" strokeWidth="4" strokeLinecap="round">
          <path d="M45 17V8q0-6-6-6H8Q2 2 2 8v24q0 6 6 6h17M16 11h21M8 20h15M16 28h8" />
          <path d="M33 23h10l5 8.500-5 8.500H33l-5-8.500z" strokeWidth="3.500" strokeLinejoin="round" />
          <circle cx="38" cy="31.500" r="1.500" strokeWidth="2.500" />
        </svg>
      </div>
      <div className="relative ml-[43px] mt-[17px] h-[84px] w-[445px] text-[35px]">
        <svg className="absolute inset-0" width="445" height="84" viewBox="0 0 445 84">
          <defs>
            <linearGradient id="up">
              <stop offset="0" stopColor="#fdf0ef" />
              <stop offset="1" stopColor="#fbe4e4" />
            </linearGradient>
            <linearGradient id="dn">
              <stop offset="0" stopColor="#f4f9ff" />
              <stop offset="1" stopColor="#e8f1fd" />
            </linearGradient>
          </defs>
          <path d="M42 0H230L206 84H42A42 42 0 0 1 42 0z" fill="url(#up)" />
          <path d="M238 0H403A42 42 0 0 1 403 84H214z" fill="url(#dn)" />
        </svg>
        <div className="relative flex h-full items-center">
          <span className="ml-[29px] w-[237px] text-[#cf3b3b]">
            <Mixed text="看涨 63%" />
          </span>
          <span className="text-[#4a8fe0]">
            <Mixed text="看跌 37%" />
          </span>
        </div>
      </div>
    </div>
  );
}

function Vip() {
  return (
    <svg width="28" height="28" viewBox="0 0 28 28" fill="#e3a440">
      <path d="M0 1h11l-1 3 2 12 8-12-1-3h9l-1 3-14 23H8L3 4z" />
    </svg>
  );
}

function FeatureBar() {
  return (
    <div className="flex h-[77px] items-center whitespace-nowrap border-t-2 border-[#efefef] pt-[2px] text-[33.300px] text-[#666]">
      <span className="ml-[46px] w-[77px]">特色</span>
      <svg className="mt-[4px]" width="21" height="13" viewBox="0 0 20 12" fill="#999">
        <path d="M2.500 0h15q2 0 .8 1.800L11 11.200q-1 1-2 0L1.700 1.800Q.5 0 2.500 0z" />
      </svg>
      <div className="ml-[46px] h-[42px] w-[2px] bg-[#ededed]" />
      <span className="ml-[46px] w-[113px] shrink-0">量比</span>
      <span className="w-[184px] shrink-0">买卖力道</span>
      <Vip />
      <span className="ml-[12px] w-[152px] shrink-0">驱动力</span>
      <Vip />
      <span className="ml-[12px] w-[118px] shrink-0">博弈</span>
      <Vip />
      <span className="ml-[12px] w-[119px] shrink-0">DDX</span>
      <Vip />
    </div>
  );
}

function InfoTabs() {
  return (
    <div className="flex h-[65px] overflow-hidden whitespace-nowrap border-b-2 border-[#f0f0f0] pt-[27px] text-[38px] leading-[50px] text-black">
      <span className="ml-[59px] w-[155px] shrink-0 tracking-[-3px]">F10</span>
      <span className="w-[169px] shrink-0">行业</span>
      <span className="w-[169px] shrink-0">基金</span>
      <span className="w-[149px] shrink-0 text-[#cf3131]">扫雷</span>
      <span className="w-[190px] shrink-0">财富圈</span>
      <span className="w-[149px] shrink-0">异动</span>
      <span className="shrink-0">AI诊</span>
    </div>
  );
}

function NavItem({ label, active, children }: { label: string; active?: boolean; children: ReactNode }) {
  return (
    <div className={`flex w-[198px] flex-col items-center text-[32px] ${active ? 'text-[#d42f2f]' : 'text-[#606060]'}`}>
      <svg className="mt-[14px]" width="56" height="58" viewBox="0 0 56 58" fill="none" stroke="#333" strokeWidth="4">
        {children}
      </svg>
      <span className="mt-[8px] leading-[40px]">{label}</span>
    </div>
  );
}

function BottomNav() {
  return (
    <div className="flex h-[173px]">
      <div className="flex w-[287px] flex-col items-center">
        <svg className="mt-[9px]" width="19" height="11" viewBox="0 0 19 11" fill="#999">
          <path d="M8.500.5q1-.8 2 0l8 8.500q.8 2-1 2h-16q-1.500 0-.8-2z" />
        </svg>
        <span className="mt-[15px] text-[35px] leading-[42px] tracking-[-3.700px] text-[#1a941a]">3891.72</span>
        <div className="mt-[8px] flex items-center gap-[9px] text-[31px] leading-[40px]">
          <span className="text-[#666]">上证</span>
          <span className="tracking-[-1.900px] text-[#1a941a]">−0.63%</span>
        </div>
      </div>
      <NavItem label="交易" active>
        <defs>
          <linearGradient id="deal" x1="0" y1="0" x2="1" y2="1">
            <stop offset="0" stopColor="#f4a09f" />
            <stop offset="1" stopColor="#e61919" />
          </linearGradient>
        </defs>
        <path d="M26 3q2-1 4 0l19 11q3 2 3 5v21q0 3-3 5L30 56q-2 1-4 0L7 45q-3-2-3-5V19q0-3 3-5z" fill="url(#deal)" stroke="none" />
        <path d="M18 25.500h20l-5-6M38 33H18l5 6" stroke="#fff" strokeWidth="4.500" strokeLinecap="round" strokeLinejoin="round" />
      </NavItem>
      <NavItem label="预警">
        <path d="M7 46q-2-5 3-9 2-2 2-6v-6q0-10 10-14 3-1 4-4 2-3 4 0 1 3 4 4 10 4 10 14v6q0 4 2 6 5 4 3 9z" strokeLinejoin="round" />
        <path d="M22 50h12q-2 6-6 6t-6-6z" fill="#333" stroke="none" />
      </NavItem>
      <NavItem label="删自选">
        <circle cx="28" cy="29" r="24.500" />
        <path d="M16 29h24" />
      </NavItem>
      <NavItem label="更多">
        <rect x="5" y="7" width="19" height="18" rx="2.500" />
        <rect x="32" y="7" width="19" height="18" rx="2.500" />
        <rect x="5" y="33" width="19" height="18" rx="2.500" />
        <rect x="32" y="33" width="19" height="18" rx="2.500" />
      </NavItem>
    </div>
  );
}

export default function App() {
  return (
    <div className="h-[2340px] w-[1080px] overflow-hidden bg-white font-['Roboto','Noto_Sans_CJK_SC',sans-serif]">
      <StatusBar />
      <Header />
      <Quote />
      <Notice />
      <PeriodTabs />
      <div className="flex h-[1248px]">
        <Charts />
        <OrderBook />
      </div>
      <CommentBar />
      <FeatureBar />
      <div className="h-[16px] bg-[#f4f4f4]" />
      <InfoTabs />
      <BottomNav />
    </div>
  );
}
